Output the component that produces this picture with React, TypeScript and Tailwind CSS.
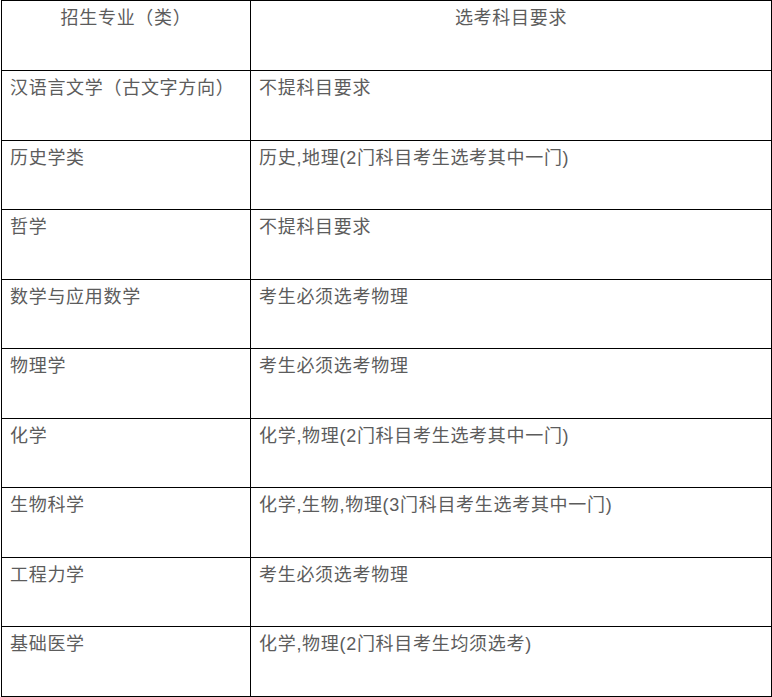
import React from "react";

// Subject requirement rows: major / required subjects
const rows: [string, string][] = [
  ["汉语言文学（古文字方向）", "不提科目要求"],
  ["历史学类", "历史,地理(2门科目考生选考其中一门)"],
  ["哲学", "不提科目要求"],
  ["数学与应用数学", "考生必须选考物理"],
  ["物理学", "考生必须选考物理"],
  ["化学", "化学,物理(2门科目考生选考其中一门)"],
  ["生物科学", "化学,生物,物理(3门科目考生选考其中一门)"],
  ["工程力学", "考生必须选考物理"],
  ["基础医学", "化学,物理(2门科目考生均须选考)"],
];

const font = {
  fontFamily: '"Liberation Sans", "Noto Sans CJK SC", sans-serif',
};

export default function App() {
  return (
    <div className="bg-white w-[772px] h-[697px] overflow-hidden" style={font}>
      <table className="ml-px border-collapse table-fixed w-[771px] text-[18px] leading-6 tracking-[0.7px] text-[#5c5c5c]">
        <colgroup>
          <col className="w-[249px]" />
          <col />
        </colgroup>
        <thead>
          <tr className="h-[70px]">
            <th className="border border-black align-top text-center font-normal px-2 pt-[5px]">
              招生专业（类）
            </th>
            <th className="border border-black align-top text-center font-normal px-2 pt-[5px]">
              选考科目要求
            </th>
          </tr>
        </thead>
        <tbody>
          {rows.map(([major, req]) => (
            <tr key={major} className="h-[69.5px]">
              <td className="border border-black align-top px-2 pt-[5px]">{major}</td>
              <td className="border border-black align-top px-2 pt-[5px]">{req}</td>
            </tr>
          ))}
        </tbody>
      </table>
    </div>
  );
}
